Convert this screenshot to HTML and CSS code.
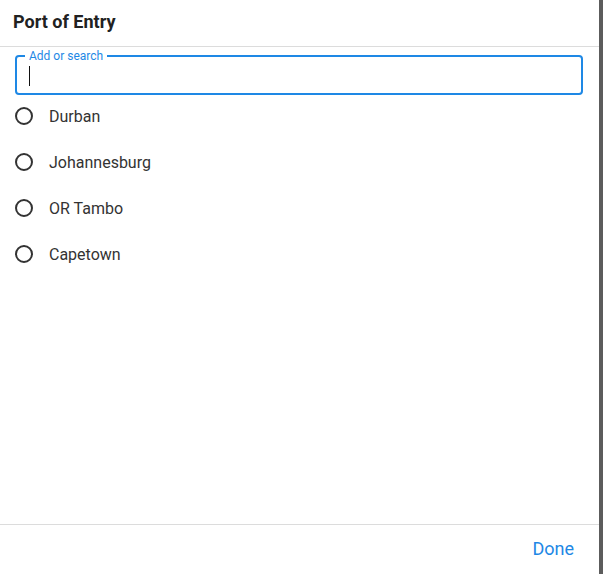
FILE: index.html
```html
<!DOCTYPE html>
<html>
<head>
<meta charset="utf-8">
<link rel="stylesheet" href="styles.css">
</head>
<body>
<div class="page">
  <div class="dialog">
    <div class="header">Port of Entry</div>
    <div class="content">
      <fieldset class="field">
        <legend class="field-label">Add or search</legend>
        <span class="cursor"></span>
      </fieldset>
      <div class="options">
        <div class="option"><span class="radio"></span><span class="option-text">Durban</span></div>
        <div class="option"><span class="radio"></span><span class="option-text">Johannesburg</span></div>
        <div class="option"><span class="radio"></span><span class="option-text">OR Tambo</span></div>
        <div class="option"><span class="radio"></span><span class="option-text">Capetown</span></div>
      </div>
    </div>
    <div class="footer"><span class="done">Done</span></div>
  </div>
  <div class="edge"></div>
</div>
</body>
</html>
```
FILE: styles.css
```css
html, body {
  margin: 0;
  padding: 0;
  height: 100%;
}
body {
  font-family: Roboto, "Liberation Sans", sans-serif;
  color: rgba(0, 0, 0, 0.87);
  background: #fff;
}
.page {
  display: flex;
  height: 574px;
  width: 603px;
}
.dialog {
  width: 599px;
  background: #fff;
  display: flex;
  flex-direction: column;
}
.edge {
  width: 4px;
  background: #5c5c5c;
}
.header {
  height: 47px;
  box-sizing: border-box;
  padding: 11px 0 0 13px;
  font-size: 18px;
  font-weight: 700;
  line-height: 22px;
  border-bottom: 1px solid #dcdcdc;
  color: #212121;
}
.content {
  flex: 1;
  padding: 0 16px 0 15px;
}
.field {
  margin: 2px 0 0 0;
  height: 46px;
  box-sizing: border-box;
  border: 2px solid #1e88e5;
  border-radius: 4px;
  padding: 0 0 0 12px;
  min-width: 0;
}
.field-label {
  font-size: 12px;
  line-height: 14px;
  color: #1e88e5;
  padding: 0 4px;
  margin-left: -4px;
}
.cursor {
  display: block;
  width: 1px;
  height: 20px;
  background: #111;
  margin-top: 3px;
}
.options {
  display: flex;
  flex-direction: column;
  margin-top: -2px;
}
.option {
  height: 46px;
  display: flex;
  align-items: center;
  gap: 16px;
  font-size: 16px;
}
.radio {
  width: 14px;
  height: 14px;
  border: 2px solid #333;
  border-radius: 50%;
}
.option-text {
  color: #333;
}
.footer {
  height: 50px;
  box-sizing: border-box;
  border-top: 1px solid #dcdcdc;
  display: flex;
  align-items: center;
  justify-content: flex-end;
  padding: 0 25px 2px 0;
}
.done {
  font-size: 18px;
  color: #1e88e5;
}
```
